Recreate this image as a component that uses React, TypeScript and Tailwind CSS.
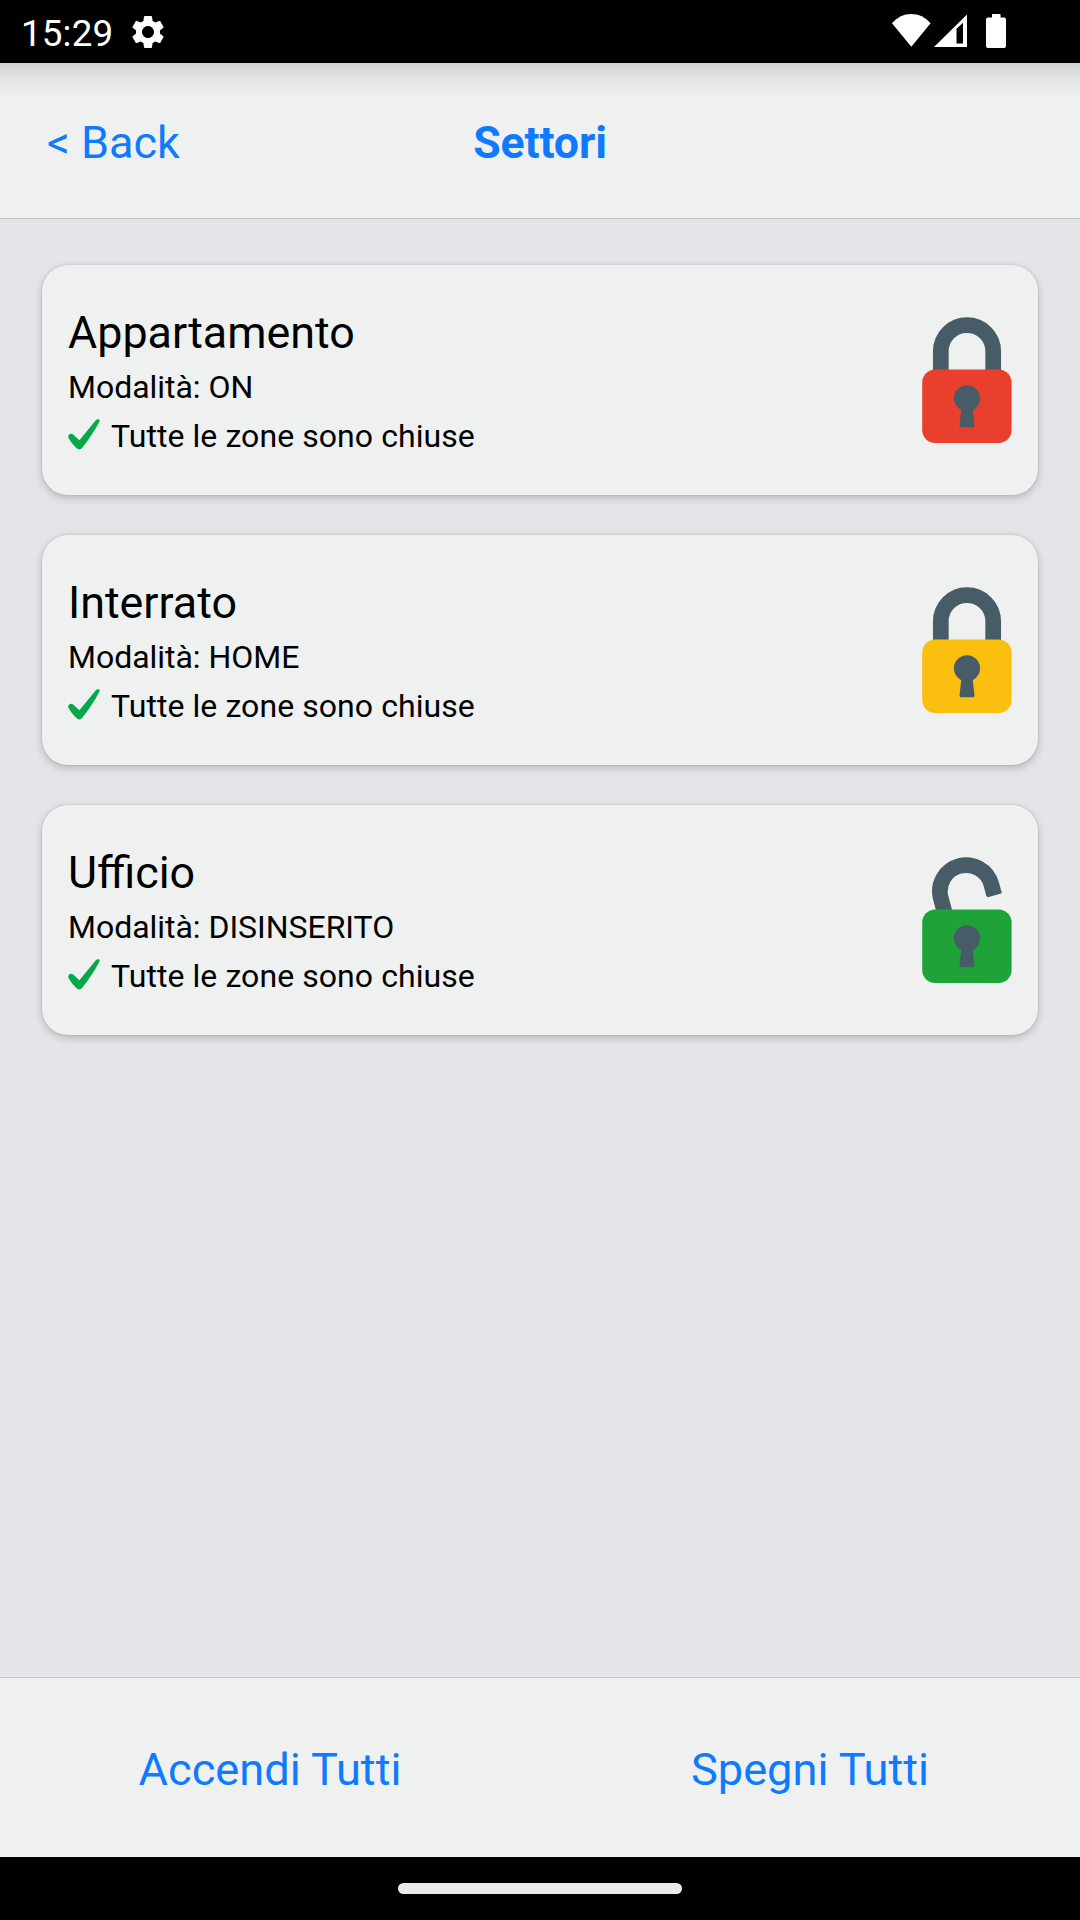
import React from "react";
import { MdSettings } from "react-icons/md";

type Sector = { name: string; mode: string; color: string; open?: boolean };

const sectors: Sector[] = [
  { name: "Appartamento", mode: "ON", color: "#e8402d" },
  { name: "Interrato", mode: "HOME", color: "#fbc00f" },
  { name: "Ufficio", mode: "DISINSERITO", color: "#1fa338", open: true },
];

function Lock({ color, open }: { color: string; open?: boolean }) {
  return (
    <svg className="h-[127px] w-[90px] shrink-0" viewBox="0 0 90 127" fill="none">
      {open ? (
        <path
          d="M24.5 62.5 L18.7 40.8 A26.2 26.2 0 0 1 69.3 27.2 L72 37.2"
          stroke="#475c66"
          strokeWidth="15.7"
        />
      ) : (
        <path d="M18.8 60V34.3a26.2 26.2 0 0 1 52.4 0V60" stroke="#475c66" strokeWidth="15.7" />
      )}
      {open && (
        <path d="M66.2 38.4l11.8-3.2" stroke="#475c66" strokeWidth="3.4" strokeLinecap="round" />
      )}
      <rect x="0.2" y="52.5" width="89.4" height="73.6" rx="13" fill={color} />
      <circle cx="45" cy="81.3" r="13.1" fill="#475c66" />
      <path
        d="M39.5 90h11l2 18.5q.2 1.7-1.5 1.7H39q-1.7 0-1.5-1.7z"
        fill="#475c66"
      />
    </svg>
  );
}

function Check() {
  return (
    <svg className="-mt-[3px] h-[31px] w-8" viewBox="0 0 32 31">
      <path
        d="M.3 18.4C-.5 15.6 3.2 13.6 5.4 15.7L11.4 21.2 27.6 1.6C29.6-.6 32.6.2 31.3 2.8 26.5 12.2 20.5 21 14.2 28.8c-2 2.2-4 2.2-6 0C5.2 25.6 2.2 22.2.3 18.4z"
        fill="#06a94a"
      />
    </svg>
  );
}

function StatusBar() {
  return (
    <div className="flex h-[63px] shrink-0 items-start bg-black text-white">
      <span className="ml-[21px] mt-3 text-[36.75px] leading-[43px] tracking-[0.15px]">15:29</span>
      <MdSettings className="ml-[15px] mt-[11.5px] size-10" />
      <div className="ml-auto mr-[74px] mt-3.5 flex">
        <svg className="h-[34px] w-[39px]" viewBox="0 0 39 34" fill="white">
          <path d="M0 9.3C5.3 3.2 12 0 19.3 0S33.3 3.2 38.6 9.3L19.3 32.8z" />
        </svg>
        <svg className="ml-[3px] h-[34px] w-[33px]" viewBox="0 0 33 34">
          <path d="M0 33L33 .4V33z" fill="white" />
          <path d="M22.5 14.8L29 8.8V29.5H22.5z" fill="black" />
        </svg>
        <svg className="ml-[19px] h-[34px] w-5" viewBox="0 0 20 34" fill="white">
          <path d="M6 0h8.5v3.5H18a2 2 0 0 1 2 2V32a2 2 0 0 1-2 2H2a2 2 0 0 1-2-2V5.5a2 2 0 0 1 2-2h4z" />
        </svg>
      </div>
    </div>
  );
}

export default function App() {
  return (
    <div className="flex h-[1920px] w-[1080px] flex-col overflow-hidden bg-[#e4e4e9] font-['Roboto',sans-serif] text-black">
      <StatusBar />
      <header className="grid h-[156px] shrink-0 grid-cols-3 items-center border-b border-[#c2c3c8] bg-[#eef1f0] bg-[linear-gradient(to_bottom,#cfd1d0_0px,#dfe1e0_12px,#e9ebea_24px,#eef1f0_38px)] pt-1 text-[44.6px] leading-[52px] text-[#0f7aff]">
        <span className="pl-[47px] text-[45px]">&lt; Back</span>
        <h1 className="text-center font-bold tracking-[-0.1px]">Settori</h1>
      </header>
      <main className="flex flex-1 flex-col gap-10 px-[42px] pt-[46px]">
        {sectors.map((s) => (
          <section
            key={s.name}
            className="flex h-[230px] items-center justify-between rounded-[26px] bg-[#eef1f0] px-[26px] shadow-[0_3px_9px_rgba(0,0,0,0.2),0_0_2px_rgba(0,0,0,0.18)]"
          >
            <div className="pt-px">
              <h2 className="text-[44.8px] leading-[52px]">{s.name}</h2>
              <p className="mt-2.5 text-[32px] leading-9 tracking-[-0.03px]">Modalità: {s.mode}</p>
              <div className="mt-[13px] flex items-center">
                <Check />
                <span className="ml-[11px] text-[32px] leading-9 tracking-[0.07px]">
                  Tutte le zone sono chiuse
                </span>
              </div>
            </div>
            <Lock color={s.color} open={s.open} />
          </section>
        ))}
      </main>
      <footer className="grid h-[180px] shrink-0 grid-cols-2 items-center border-t border-[#c6c6ca] bg-[#eef1f0] pt-1 text-center text-[45.2px] leading-[52px] text-[#0f7aff]">
        <span>Accendi Tutti</span>
        <span>Spegni Tutti</span>
      </footer>
      <div className="flex h-[63px] shrink-0 justify-center bg-black pt-[26px]">
        <div className="h-[11px] w-[284px] rounded-full bg-[#ebebeb]" />
      </div>
    </div>
  );
}
